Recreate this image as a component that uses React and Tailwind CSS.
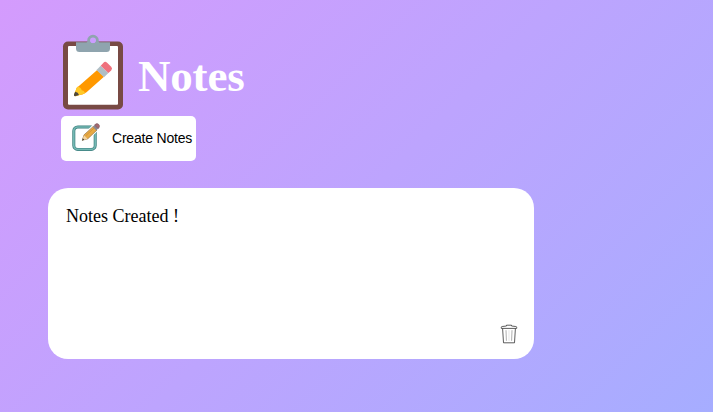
function ClipboardLogo() {
  return (
    <svg width="62" height="76" viewBox="0 0 62 76" fill="none">
      <rect x="1" y="7.5" width="60" height="68" rx="5" fill="#784a44" />
      <rect x="6" y="12" width="50" height="58.7" rx="1" fill="#fff" />
      <circle cx="31" cy="6.5" r="4.4" fill="#cb9dff" stroke="#8fa4ae" strokeWidth="2.8" />
      <path
        d="M14 8.3H24.5L27.5 7Q28.7 9.2 31 9.2T34.5 7L37.5 8.3H48V14.5Q48 18 44.5 18H17.5Q14 18 14 14.5Z"
        fill="#8fa4ae"
      />
      <path d="M35.2 36L17.5 51.5L14.5 54L12.3 62L20.5 60.5L24.5 58.3L42 42.8Z" fill="#ff9800" />
      <path d="M15.2 52.8L12 60.2Q11.4 62.7 14 62.2L23.3 59.2Q22 56.4 19.7 56.2Q18.8 53.2 15.2 52.8Z" fill="#ffc928" />
      <path d="M13.2 57.7L12 60.5Q11.6 62.6 13.8 62L17 61Q16.3 58.3 13.2 57.7Z" fill="#4e473d" />
      <path d="M34.5 36L38.7 31.8L46.4 39L42 43.3Z" fill="#b0bec5" />
      <path d="M38.7 31.8L41.5 28.8Q43 27 45.1 28.7L49.2 32.8Q50.9 34.6 49.2 36.4L46.4 39Z" fill="#ef717d" />
    </svg>
  );
}

function EditIcon() {
  return (
    <svg width="30" height="30" viewBox="0 0 30 30" fill="none">
      <rect x="2.8" y="4" width="21.4" height="22.4" rx="4" stroke="#397d7c" strokeWidth="3" />
      <rect x="2.8" y="4" width="21.4" height="22.4" rx="4" stroke="#73b8b3" strokeWidth="1.7" />
      <path d="M11.7 17.5L14 11.7L23.7 2L27 5.4L17.2 15.2Z" fill="#fff" stroke="#fff" strokeWidth="3" />
      <path d="M11.3 17.2L13 11.9L22.3 3.4L26 7L16.8 15.8Z" fill="#e8aa43" stroke="#86602f" strokeWidth=".6" />
      <path d="M14.7 12.8L23.5 4.6" stroke="#c58532" strokeWidth=".6" />
      <path d="M11.1 17.5L13 12.2L16.6 15.7Z" fill="#f3d4a1" />
      <path d="M11 17.7L11.8 15.3L13.3 16.8Z" fill="#433c38" />
      <path d="M21.8 3.8L24 1.8L27.4 5.3L25.3 7.4Z" fill="#8b8791" />
      <path d="M23.6 2L24.6 1Q26.1 0 27.6 1.3T28.2 4.5L27.1 5.5Z" fill="#a5686f" stroke="#684950" strokeWidth=".5" />
    </svg>
  );
}

function TrashIcon() {
  return (
    <svg width="18" height="20" viewBox="0 0 18 20" fill="none" stroke="#333" strokeWidth=".8">
      <path d="M1.3 4.4V3.3Q1.3 2.6 2.2 2.5L6.5 2V1.2H11.5V2L15.8 2.5Q16.7 2.6 16.7 3.3V4.4Z" />
      <path d="M2.6 4.5L3.5 18.8H14.5L15.4 4.5" />
      <path d="M6 6.2L6.4 16.8M12 6.2L11.6 16.8" strokeWidth=".6" stroke="#777" />
      <path d="M9 6.2V16.8" strokeWidth=".4" stroke="#bbb" />
    </svg>
  );
}

export default function App() {
  return (
    <main className="h-[412px] w-full overflow-hidden bg-[linear-gradient(135deg,#d49bfd,#a6adff)] pl-12 pt-[34px]">
      <header className="ml-[14px] flex h-[82px] items-start">
        <ClipboardLogo />
        <h1 className="ml-[14px] mt-[14px] font-['Liberation_Serif',serif] text-[45px] font-bold leading-[56px] tracking-[-0.2px] text-white">
          Notes
        </h1>
      </header>
      <button className="ml-[13px] flex h-[45px] w-[135px] items-start rounded-[5px] bg-white pl-[10px] pt-[7px]">
        <EditIcon />
        <span className="ml-[11px] mt-[5px] whitespace-nowrap font-['Liberation_Sans',sans-serif] text-[14px] leading-5 tracking-[-0.2px] text-black">
          Create Notes
        </span>
      </button>
      <section className="mt-[27px] flex h-[171px] w-[486px] flex-col justify-between rounded-[20px] bg-white pb-[15px] pl-[18px] pr-4 pt-[17px]">
        <p className="font-['Liberation_Serif',serif] text-[18px] leading-[22px] text-black">Notes Created !</p>
        <button aria-label="Delete note" className="self-end">
          <TrashIcon />
        </button>
      </section>
    </main>
  );
}
